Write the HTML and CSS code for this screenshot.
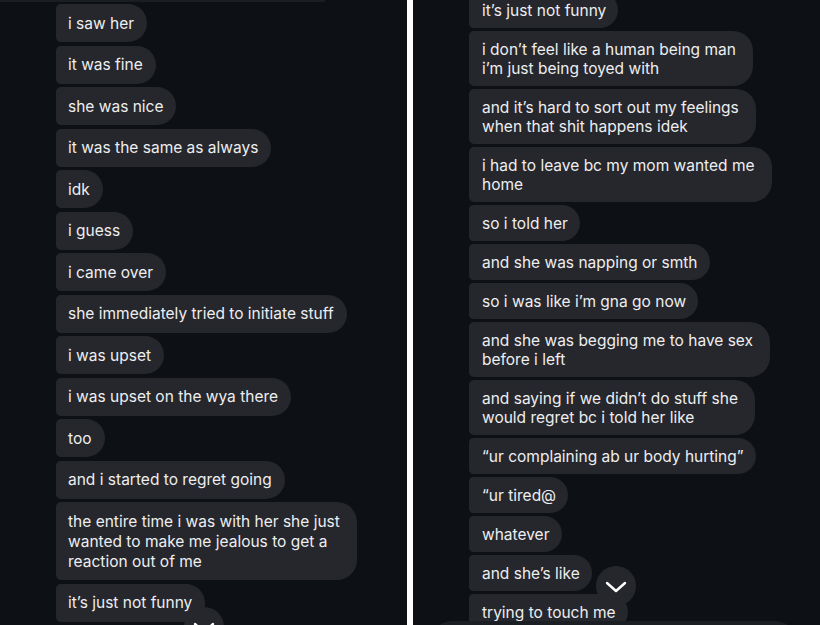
FILE: index.html
```html
<!DOCTYPE html>
<html>
<head>
<meta charset="utf-8">
<link rel="stylesheet" href="styles.css">
</head>
<body>
<div class="screen">
  <section class="panel panel-left">
    <div class="topline"></div>
    <div class="thread">
      <div class="msg">i saw her</div>
      <div class="msg">it was fine</div>
      <div class="msg">she was nice</div>
      <div class="msg">it was the same as always</div>
      <div class="msg">idk</div>
      <div class="msg">i guess</div>
      <div class="msg">i came over</div>
      <div class="msg">she immediately tried to initiate stuff</div>
      <div class="msg">i was upset</div>
      <div class="msg">i was upset on the wya there</div>
      <div class="msg">too</div>
      <div class="msg">and i started to regret going</div>
      <div class="msg multi">the entire time i was with her she just<br>wanted to make me jealous to get a<br>reaction out of me</div>
      <div class="msg">it’s just not funny</div>
    </div>
    <div class="scroll-btn scroll-left">
      <svg width="22" height="12" viewBox="0 0 22 12"><polyline points="2,2 11,10 20,2" fill="none" stroke="#fff" stroke-width="2.4" stroke-linecap="round" stroke-linejoin="round"/></svg>
    </div>
  </section>
  <div class="divider"></div>
  <section class="panel panel-right">
    <div class="thread">
      <div class="msg">it’s just not funny</div>
      <div class="msg multi">i don’t feel like a human being man<br>i’m just being toyed with</div>
      <div class="msg multi">and it’s hard to sort out my feelings<br>when that shit happens idek</div>
      <div class="msg multi">i had to leave bc my mom wanted me<br>home</div>
      <div class="msg">so i told her</div>
      <div class="msg">and she was napping or smth</div>
      <div class="msg">so i was like i’m gna go now</div>
      <div class="msg multi">and she was begging me to have sex<br>before i left</div>
      <div class="msg multi">and saying if we didn’t do stuff she<br>would regret bc i told her like</div>
      <div class="msg">“ur complaining ab ur body hurting”</div>
      <div class="msg">“ur tired@</div>
      <div class="msg">whatever</div>
      <div class="msg">and she’s like</div>
      <div class="msg">trying to touch me</div>
    </div>
    <div class="scroll-btn scroll-right">
      <svg width="22" height="12" viewBox="0 0 22 12"><polyline points="2,2 11,10 20,2" fill="none" stroke="#fff" stroke-width="2.4" stroke-linecap="round" stroke-linejoin="round"/></svg>
    </div>
    <div class="composer"></div>
  </section>
</div>
</body>
</html>
```
FILE: styles.css
```css
html, body {
  margin: 0;
  padding: 0;
  background: #0d1014;
}
body {
  font-family: Inter, "Noto Sans", "Liberation Sans", sans-serif;
  color: #eeeef0;
}
.screen {
  display: flex;
  width: 820px;
  height: 625px;
  overflow: hidden;
}
.panel {
  position: relative;
  background: #0d1014;
  overflow: hidden;
  height: 625px;
}
.panel-left {
  width: 407px;
  flex: none;
}
.divider {
  width: 6px;
  flex: none;
  background: #ffffff;
}
.panel-right {
  flex: 1;
}
.topline {
  width: 325px;
  height: 2px;
  background: #1a1d22;
}
.thread {
  display: flex;
  flex-direction: column;
  align-items: flex-start;
  padding-left: 56px;
}
.msg {
  background: #25272c;
  font-size: 15.5px;
  white-space: nowrap;
  border-radius: 5px 20px 20px 5px;
}
.panel-left .thread {
  gap: 3.5px;
  margin-top: 2px;
}
.panel-left .msg {
  line-height: 20px;
  padding: 9.5px 13px 8.5px 12px;
}
.panel-left .msg.multi {
  padding-right: 17px;
}
.panel-right .thread {
  gap: 3px;
  margin-top: -8px;
}
.panel-right .msg {
  line-height: 19px;
  padding: 8.5px 12px 8.5px 13px;
}
.panel-right .msg.multi {
  padding-right: 17px;
}
.scroll-btn {
  position: absolute;
  width: 40px;
  height: 40px;
  border-radius: 50%;
  background: #25272c;
  display: flex;
  align-items: center;
  justify-content: center;
}
.scroll-btn svg {
  margin-top: 2px;
}
.scroll-left {
  left: 184px;
  top: 607px;
}
.scroll-right {
  left: 183px;
  top: 566px;
}
.composer {
  position: absolute;
  left: 17px;
  right: 23px;
  top: 621px;
  height: 44px;
  border-radius: 22px;
  background: #1b1e22;
}
```
